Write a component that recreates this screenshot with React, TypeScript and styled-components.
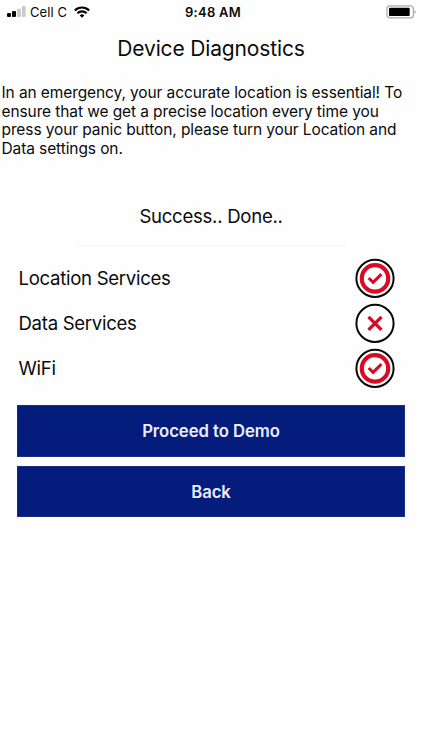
import React from "react";
import styled, { createGlobalStyle } from "styled-components";

const GlobalStyle = createGlobalStyle`
  * { box-sizing: border-box; }
  body { margin: 0; background: #fefefe; color: #0b0b0b; font-family: Inter, "Liberation Sans", sans-serif; }
`;

const Screen = styled.main`
  display: flex;
  flex-direction: column;
  width: 422px;
  height: 750px;
  overflow: hidden;
  background: #fefefe;
`;

const StatusBar = styled.header`
  display: grid;
  grid-template-columns: 1fr auto 1fr;
  align-items: center;
  height: 24px;
  padding: 0 7px;
`;

const Carrier = styled.div`
  display: flex;
  align-items: center;
  font-size: 13px;
  letter-spacing: 0.1px;
  line-height: 24px;
`;

const CarrierName = styled.span`
  margin: 0 7px 0 4px;
`;

const Clock = styled.time`
  font-size: 13px;
  font-weight: 600;
  letter-spacing: 0.25px;
  line-height: 24px;
  padding-left: 4px;
`;

const Battery = styled.svg`
  justify-self: end;
  margin-right: -2px;
`;

const Title = styled.h1`
  margin: 11px 0 0;
  font-size: 21px;
  font-weight: 400;
  line-height: 28px;
  letter-spacing: -0.15px;
  text-align: center;
`;

const Description = styled.p`
  margin: 20.8px 0 0;
  padding-left: 1.5px;
  font-size: 15.5px;
  line-height: 18.8px;
  letter-spacing: -0.1px;
  white-space: pre-line;
`;

const Result = styled.p`
  margin: 42.7px 0 0;
  font-size: 18.6px;
  line-height: 28px;
  letter-spacing: -0.28px;
  text-align: center;
`;

const Divider = styled.hr`
  width: 271px;
  height: 2px;
  margin: 15.3px 0 0 75px;
  border: 0;
  background: #f8f8f8;
`;

const Checks = styled.ul`
  display: flex;
  flex-direction: column;
  margin: 9px 0 0;
  padding: 0 27px 0 18.5px;
  list-style: none;
`;

const CheckRow = styled.li`
  display: flex;
  align-items: center;
  justify-content: space-between;
  height: 45px;
  font-size: 18.6px;
  letter-spacing: -0.3px;
`;

const CheckIcon = styled.svg`
  flex: none;
  margin-bottom: 1px;
`;

const Actions = styled.div`
  display: flex;
  flex-direction: column;
  gap: 9px;
  margin: 14.2px 17px 0;
`;

const ActionButton = styled.button`
  height: 51.6px;
  padding: 0;
  border: 1px solid #1c2c84;
  border-radius: 0;
  background: #041c7c;
  color: #e9edff;
  font: 600 16.7px/50px Inter, "Liberation Sans", sans-serif;
  letter-spacing: -0.05px;
`;

const SignalIcon = () => (
  <svg width="19" height="12" viewBox="0 0 19 12">
    <rect x="0" y="7" width="4" height="4" rx="1" fill="#050505" />
    <rect x="5" y="5" width="4" height="6" rx="1" fill="#050505" />
    <rect x="10" y="2.8" width="4" height="8.2" rx="1" fill="#c9c9c9" />
    <rect x="15" y="0" width="3.6" height="11" rx="1" fill="#c9c9c9" />
  </svg>
);

const WifiIcon = () => (
  <svg width="16" height="12" viewBox="0 0 16 12" fill="none" stroke="#050505" strokeWidth="2.2">
    <path d="M.8 4.5a10.2 10.2 0 0 1 14.4 0" />
    <path d="M3.4 7.3a6.5 6.5 0 0 1 9.2 0" />
    <path d="M8 11.8 5.7 9.4a3.3 3.3 0 0 1 4.6 0Z" fill="#050505" stroke="none" />
  </svg>
);

const StatusIcon = ({ enabled }: { enabled: boolean }) => (
  <CheckIcon width="40" height="40" viewBox="0 0 40 40" fill="none">
    <circle cx="20" cy="20.4" r="18.6" fill="#fff" stroke="#080808" strokeWidth="2" />
    {enabled ? (
      <>
        <circle cx="20" cy="20.4" r="13.2" stroke="#dc0924" strokeWidth="4.2" />
        <path d="m13.7 20 4.4 4.4 8.3-8.3" stroke="#dc0924" strokeWidth="3" />
      </>
    ) : (
      <path d="m13.5 13.9 13 13m0-13-13 13" stroke="#dc0924" strokeWidth="3.4" />
    )}
  </CheckIcon>
);

const checks = [
  { label: "Location Services", enabled: true },
  { label: "Data Services", enabled: false },
  { label: "WiFi", enabled: true },
];

export default function App() {
  return (
    <>
      <GlobalStyle />
      <Screen>
        <StatusBar>
          <Carrier>
            <SignalIcon />
            <CarrierName>Cell C</CarrierName>
            <WifiIcon />
          </Carrier>
          <Clock>9:48 AM</Clock>
          <Battery width="31" height="14" viewBox="0 0 31 14">
            <rect x="1" y="0.9" width="26.4" height="12" rx="3" fill="#fff" stroke="#aaa" strokeWidth="1.2" />
            <rect x="3" y="2.8" width="20.7" height="8.3" rx="1" fill="#000" />
            <path d="M28.6 5v4c1.5-.5 1.5-3.5 0-4Z" fill="#999" />
          </Battery>
        </StatusBar>
        <Title>Device Diagnostics</Title>
        <Description>
          {"In an emergency, your accurate location is essential! To\nensure that we get a precise location every time you\npress your panic button, please turn your Location and\nData settings on."}
        </Description>
        <Result>Success.. Done..</Result>
        <Divider />
        <Checks>
          {checks.map(({ label, enabled }) => (
            <CheckRow key={label}>
              <span>{label}</span>
              <StatusIcon enabled={enabled} />
            </CheckRow>
          ))}
        </Checks>
        <Actions>
          <ActionButton>Proceed to Demo</ActionButton>
          <ActionButton>Back</ActionButton>
        </Actions>
      </Screen>
    </>
  );
}
